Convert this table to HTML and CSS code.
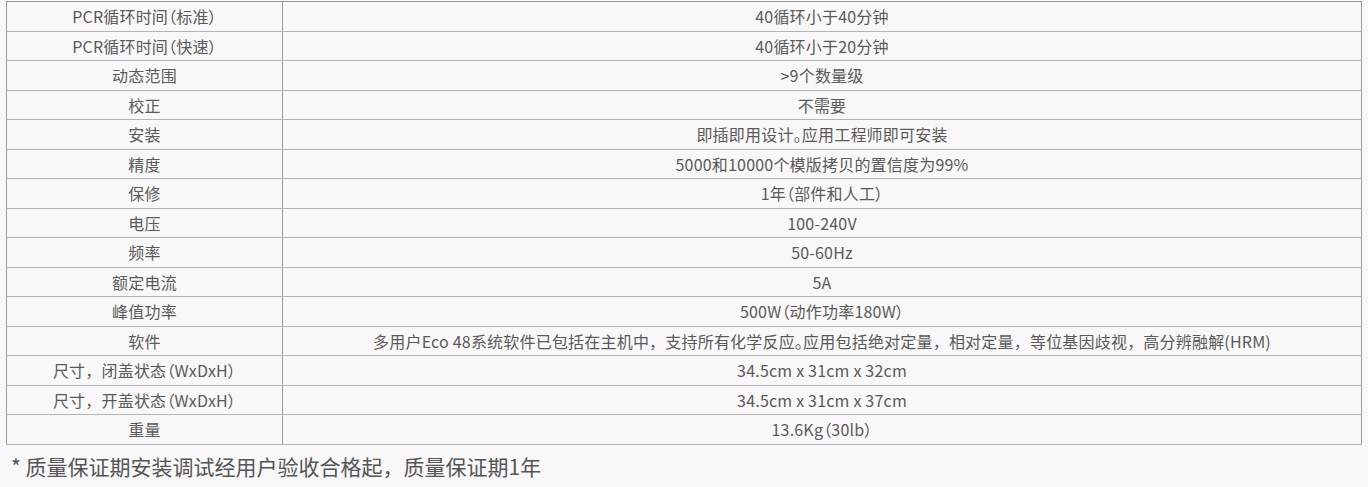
FILE: index.html
```html
<!DOCTYPE html>
<html lang="zh-CN">
<head>
<meta charset="utf-8">
<link rel="stylesheet" href="styles.css">
</head>
<body>
<table class="spec">
<tbody>
<tr><td class="k">PCR循环时间（标准）</td><td>40循环小于40分钟</td></tr>
<tr><td class="k">PCR循环时间（快速）</td><td>40循环小于20分钟</td></tr>
<tr><td class="k">动态范围</td><td>&gt;9个数量级</td></tr>
<tr><td class="k">校正</td><td>不需要</td></tr>
<tr><td class="k">安装</td><td>即插即用设计。应用工程师即可安装</td></tr>
<tr><td class="k">精度</td><td>5000和10000个模版拷贝的置信度为99%</td></tr>
<tr><td class="k">保修</td><td>1年（部件和人工）</td></tr>
<tr><td class="k">电压</td><td>100-240V</td></tr>
<tr><td class="k">频率</td><td>50-60Hz</td></tr>
<tr><td class="k">额定电流</td><td>5A</td></tr>
<tr><td class="k">峰值功率</td><td>500W（动作功率180W）</td></tr>
<tr><td class="k">软件</td><td>多用户Eco 48系统软件已包括在主机中<span class="fw">，</span>支持所有化学反应。应用包括绝对定量<span class="fw">，</span>相对定量<span class="fw">，</span>等位基因歧视<span class="fw">，</span>高分辨融解(HRM)</td></tr>
<tr><td class="k">尺寸<span class="fw">，</span>闭盖状态（WxDxH）</td><td>34.5cm x 31cm x 32cm</td></tr>
<tr><td class="k">尺寸<span class="fw">，</span>开盖状态（WxDxH）</td><td>34.5cm x 31cm x 37cm</td></tr>
<tr><td class="k">重量</td><td>13.6Kg（30lb）</td></tr>
</tbody>
</table>
<p class="note">* 质量保证期安装调试经用户验收合格起，质量保证期1年</p>
</body>
</html>
```
FILE: styles.css
```css
html, body {
  margin: 0;
  padding: 0;
  background: #f8f8f8;
}
body {
  padding: 1px 6px 0 6px;
  font-family: "Noto Sans CJK SC", "Noto Sans", sans-serif;
  color: #5a5a5a;
}
.spec {
  width: 1356px;
  border-collapse: collapse;
  font-size: 16px;
  font-feature-settings: "palt";
}
.spec td {
  border: 1px solid #9a9a9a;
  border-bottom-color: #b4b4b4;
  height: 28.5px;
  padding: 0;
  text-align: center;
  vertical-align: middle;
  line-height: 20px;
  letter-spacing: 0.2px;
}
.spec td.k {
  width: 275px;
}
.spec .fw {
  font-feature-settings: normal;
}
.note {
  margin: 6px 0 0 5px;
  font-size: 21px;
  line-height: 30px;
  color: #555;
}
```
